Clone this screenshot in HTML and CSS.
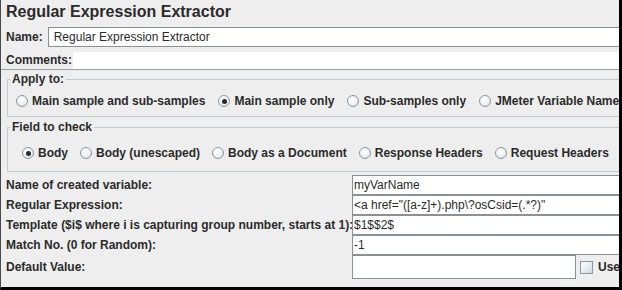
FILE: index.html
```html
<!DOCTYPE html>
<html>
<head>
<meta charset="utf-8">
<link rel="stylesheet" href="styles.css">
</head>
<body>
<div class="frame">
  <div class="title">Regular Expression Extractor</div>
  <div class="name-row">
    <span class="lbl">Name:</span>
    <div class="field">Regular Expression Extractor</div>
  </div>
  <div class="comments-row">
    <span class="lbl">Comments:</span>
    <div class="area"></div>
  </div>
  <fieldset class="group apply">
    <legend>Apply to:</legend>
    <div class="opts">
      <label class="opt"><span class="radio"></span>Main sample and sub-samples</label>
      <label class="opt"><span class="radio on"></span>Main sample only</label>
      <label class="opt"><span class="radio"></span>Sub-samples only</label>
      <label class="opt"><span class="radio"></span>JMeter Variable Name</label>
    </div>
  </fieldset>
  <fieldset class="group check">
    <legend>Field to check</legend>
    <div class="opts">
      <label class="opt"><span class="radio on"></span>Body</label>
      <label class="opt"><span class="radio"></span>Body (unescaped)</label>
      <label class="opt"><span class="radio"></span>Body as a Document</label>
      <label class="opt"><span class="radio"></span>Response Headers</label>
      <label class="opt"><span class="radio"></span>Request Headers</label>
    </div>
  </fieldset>
  <div class="grid">
    <span class="glbl">Name of created variable:</span>
    <div class="gfield">myVarName</div>
    <span class="glbl">Regular Expression:</span>
    <div class="gfield">&lt;a href="([a-z]+).php\?osCsid=(.*?)"</div>
    <span class="glbl">Template ($i$ where i is capturing group number, starts at 1):</span>
    <div class="gfield">$1$$2$</div>
    <span class="glbl">Match No. (0 for Random):</span>
    <div class="gfield">-1</div>
    <span class="glbl">Default Value:</span>
    <div class="last">
      <div class="gfield short"></div>
      <label class="use"><span class="check-box"></span>Use</label>
    </div>
  </div>
</div>
</body>
</html>
```
FILE: styles.css
```css
html, body {
  margin: 0;
  padding: 0;
  background: #eeeeee;
}
.frame {
  width: 622px;
  height: 290px;
  box-sizing: border-box;
  background: #eeeeee;
  border-left: 1px solid #4a4a4a;
  border-right: 3px solid #000;
  border-bottom: 3px solid #000;
  overflow: hidden;
  font-family: "Liberation Sans", Arial, sans-serif;
  font-size: 12px;
  color: #2b2b2b;
}
.title {
  height: 27px;
  box-sizing: border-box;
  padding: 2px 0 0 5px;
  font-size: 16px;
  font-weight: bold;
  line-height: 20px;
  white-space: nowrap;
}
.lbl {
  font-weight: bold;
  padding-left: 5px;
  white-space: nowrap;
}
.name-row {
  display: flex;
  align-items: center;
  height: 20px;
  gap: 5px;
}
.field {
  flex: 1;
  height: 20px;
  box-sizing: border-box;
  background: #fff;
  border: 1px solid #8a9299;
  border-right: none;
  padding-left: 5px;
  line-height: 18px;
  white-space: nowrap;
}
.comments-row {
  display: flex;
  align-items: stretch;
  margin-top: 5px;
  height: 18px;
  box-sizing: border-box;
  border-bottom: 1px solid #9aa0a6;
}
.comments-row .lbl {
  width: 67px;
  line-height: 17px;
}
.area {
  flex: 1;
  background: #fff;
}
.group {
  margin: 2px -10px 0 6px;
  padding: 0;
  border: 1px solid #c3cad0;
  min-width: 0;
}
.group legend {
  margin-left: 2px;
  padding: 0 2px;
  font-weight: bold;
  line-height: 14px;
  white-space: nowrap;
}
.opts {
  display: flex;
  align-items: center;
  height: 14px;
  white-space: nowrap;
}
.apply .opts {
  padding: 8px 0 8px 8px;
  gap: 13px;
}
.check {
  margin-top: 3px;
}
.check .opts {
  padding: 12px 0 11px 14px;
  gap: 12px;
}
.opt {
  display: flex;
  align-items: center;
  gap: 4px;
  font-weight: bold;
  flex-shrink: 0;
}
.radio {
  position: relative;
  width: 12px;
  height: 12px;
  box-sizing: border-box;
  border-radius: 50%;
  border: 1px solid #8d979f;
  background: radial-gradient(circle at 40% 35%, #ffffff 0%, #f2f4f6 45%, #cfd7de 100%);
  flex-shrink: 0;
}
.radio.on::after {
  content: "";
  position: absolute;
  left: 2.5px;
  top: 2.5px;
  width: 5px;
  height: 5px;
  border-radius: 50%;
  background: #2a2a2a;
}
.grid {
  display: grid;
  grid-template-columns: 351px 1fr;
  grid-template-rows: 20px 20px 20px 20px 24px;
  margin-top: 3px;
}
.glbl {
  font-weight: bold;
  padding-left: 5px;
  white-space: nowrap;
  align-self: center;
}
.gfield {
  background: #fff;
  border: 1px solid #8a9299;
  border-right: none;
  box-sizing: border-box;
  padding-left: 1px;
  line-height: 18px;
  white-space: nowrap;
  margin-right: -2px;
}
.last {
  display: flex;
  align-items: center;
  gap: 4px;
  white-space: nowrap;
}
.gfield.short {
  width: 224px;
  height: 24px;
  border-right: 1px solid #8a9299;
  margin-right: 0;
  flex-shrink: 0;
}
.use {
  display: flex;
  align-items: center;
  gap: 5px;
  font-weight: bold;
  flex-shrink: 0;
}
.check-box {
  width: 13px;
  height: 13px;
  box-sizing: border-box;
  border: 1px solid #8d979f;
  background: linear-gradient(135deg, #ffffff 0%, #e9edf1 50%, #cdd5dc 100%);
}
```
